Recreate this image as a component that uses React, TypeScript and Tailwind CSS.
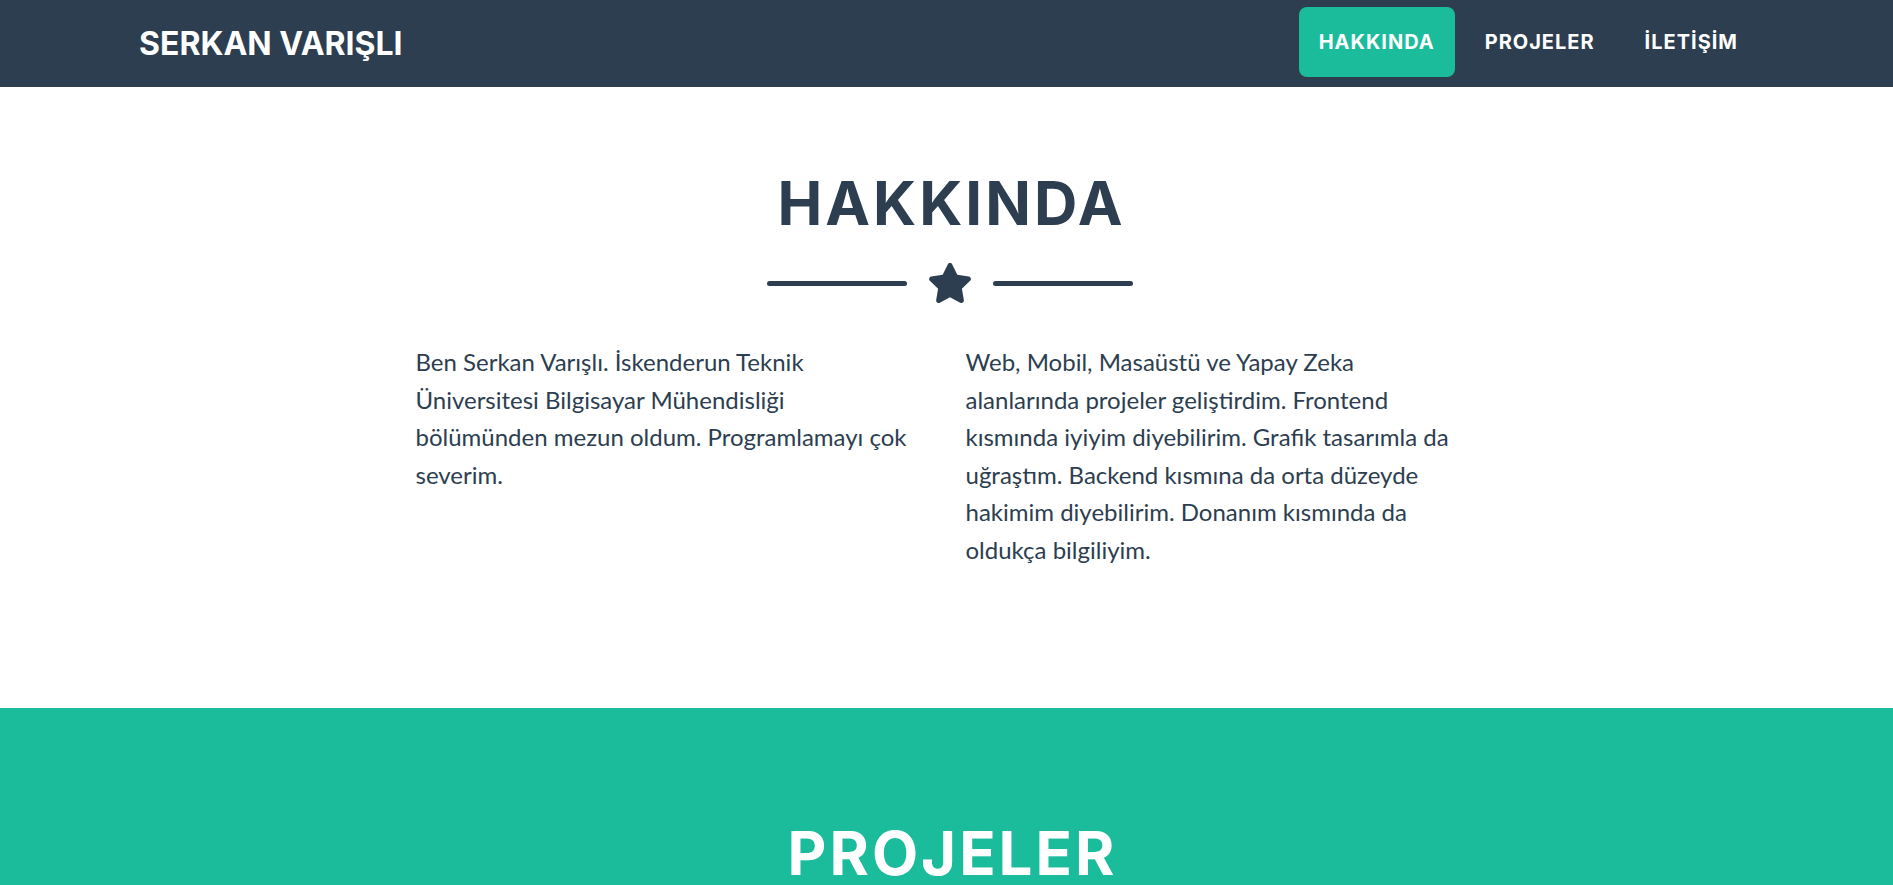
import React from "react";

const navLinks = [
  { label: "HAKKINDA", active: true },
  { label: "PROJELER", active: false },
  { label: "İLETİŞİM", active: false },
];

const Star: React.FC = () => (
  <svg viewBox="20 0 536 512" className="h-[40px] w-[42px] fill-[#2c3e50]">
    <path d="M259.3 17.8L194 150.2 47.9 171.5c-26.2 3.8-36.7 36.1-17.7 54.6l105.7 103-25 145.5c-4.5 26.3 23.2 46 46.4 33.7L288 439.6l130.7 68.7c23.2 12.2 50.9-7.4 46.4-33.7l-25-145.5 105.7-103c19-18.5 8.5-50.8-17.7-54.6L382 150.2 316.7 17.8c-11.7-23.6-45.6-23.9-57.4 0z" />
  </svg>
);

const Divider: React.FC = () => (
  <div className="mt-[24px] flex items-center justify-center gap-[22px] pl-[7px]">
    <div className="h-[5px] w-[140px] rounded-full bg-[#2c3e50]" />
    <Star />
    <div className="h-[5px] w-[140px] rounded-full bg-[#2c3e50]" />
  </div>
);

export default function App() {
  return (
    <div className="min-h-screen bg-white" style={{ fontFamily: "Lato, 'Noto Sans', sans-serif" }}>
      <nav className="flex h-[87px] items-center justify-between bg-[#2c3e50] pl-[139px] pr-[135px]">
        <a className="font-['Inter',sans-serif] text-[32px] font-bold text-white">SERKAN VARIŞLI</a>
        <ul className="mb-[4px] flex gap-[10px]">
          {navLinks.map((l) => (
            <li key={l.label}>
              <a
                className={
                  "flex h-[70px] items-center rounded-lg px-[20px] font-['Inter',sans-serif] text-[20px] font-bold tracking-[1px] text-white " +
                  (l.active ? "bg-[#1abc9c]" : "")
                }
              >
                {l.label}
              </a>
            </li>
          ))}
        </ul>
      </nav>

      <section className="pb-[140px] pt-[80px]">
        <h2 className="pl-[10px] text-center font-['Inter',sans-serif] text-[60px] font-bold leading-[72px] tracking-[3px] text-[#2c3e50]">
          HAKKINDA
        </h2>
        <Divider />
        <div className="mt-[40px] flex justify-center gap-[50px] pr-[12px] text-[24px] leading-[37.5px] text-[#2c3e50]">
          <p className="w-[500px]">
            Ben Serkan Varışlı. İskenderun Teknik Üniversitesi Bilgisayar Mühendisliği bölümünden mezun oldum.
            Programlamayı çok severim.
          </p>
          <p className="w-[500px]">
            Web, Mobil, Masaüstü ve Yapay Zeka alanlarında projeler geliştirdim. Frontend kısmında iyiyim
            diyebilirim. Grafik tasarımla da uğraştım. Backend kısmına da orta düzeyde hakimim diyebilirim.
            Donanım kısmında da oldukça bilgiliyim.
          </p>
        </div>
      </section>

      <section className="bg-[#1abc9c] pb-[120px] pt-[109px]">
        <h2 className="pl-[12px] text-center font-['Inter',sans-serif] text-[60px] font-bold leading-[72px] tracking-[3px] text-white">
          PROJELER
        </h2>
      </section>
    </div>
  );
}
